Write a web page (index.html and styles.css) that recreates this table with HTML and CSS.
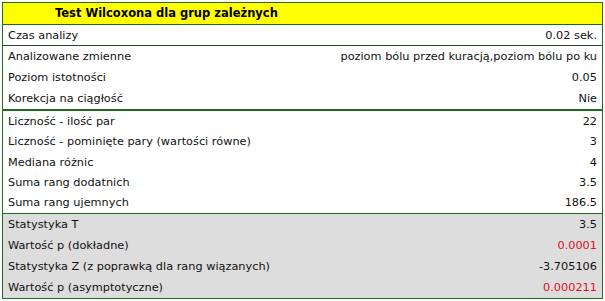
FILE: index.html
```html
<!DOCTYPE html>
<html>
<head>
<meta charset="utf-8">
<link rel="stylesheet" href="styles.css">
</head>
<body>
<div class="report">
  <div class="title">Test Wilcoxona dla grup zależnych</div>
  <div class="group">
    <div class="row line"><span>Czas analizy</span><span>0.02 sek.</span></div>
    <div class="row"><span>Analizowane zmienne</span><span>poziom bólu przed kuracją,poziom bólu po ku</span></div>
    <div class="row"><span>Poziom istotności</span><span>0.05</span></div>
    <div class="row"><span>Korekcja na ciągłość</span><span>Nie</span></div>
  </div>
  <div class="group thick">
    <div class="row"><span>Liczność - ilość par</span><span>22</span></div>
    <div class="row short"><span>Liczność - pominięte pary (wartości równe)</span><span>3</span></div>
    <div class="row"><span>Mediana różnic</span><span>4</span></div>
    <div class="row short"><span>Suma rang dodatnich</span><span>3.5</span></div>
    <div class="row short"><span>Suma rang ujemnych</span><span>186.5</span></div>
  </div>
  <div class="group stats">
    <div class="row"><span>Statystyka T</span><span>3.5</span></div>
    <div class="row"><span>Wartość p (dokładne)</span><span class="sig">0.0001</span></div>
    <div class="row"><span>Statystyka Z (z poprawką dla rang wiązanych)</span><span>-3.705106</span></div>
    <div class="row"><span>Wartość p (asymptotyczne)</span><span class="sig">0.000211</span></div>
  </div>
</div>
</body>
</html>
```
FILE: styles.css
```css
html, body {
  margin: 0;
  padding: 0;
  background: #ffffff;
}
body {
  padding: 2px 0 0 2px;
  font-family: "DejaVu Sans", Verdana, sans-serif;
  font-size: 11.3px;
  color: #111111;
}
.report {
  width: 599px;
  border: 1px solid #1f6b1f;
}
.title {
  background: #ffff00;
  height: 21px;
  line-height: 21px;
  padding-left: 52px;
  font-weight: bold;
  font-size: 11.5px;
  color: #000;
  border-bottom: 1px solid #1f6b1f;
}
.row {
  display: flex;
  justify-content: space-between;
  height: 21px;
  line-height: 21px;
  padding: 0 5px 0 5px;
}
.row.short {
  height: 20px;
  line-height: 20px;
}
.row.line {
  height: 20px;
  border-bottom: 1px solid #2a4a2a;
}
.group.thick {
  border-top: 2px solid #1f6b1f;
}
.group.stats {
  background: #dddddd;
  border-top: 1px solid #1f6b1f;
}
.sig {
  color: #e0101e;
}
```
